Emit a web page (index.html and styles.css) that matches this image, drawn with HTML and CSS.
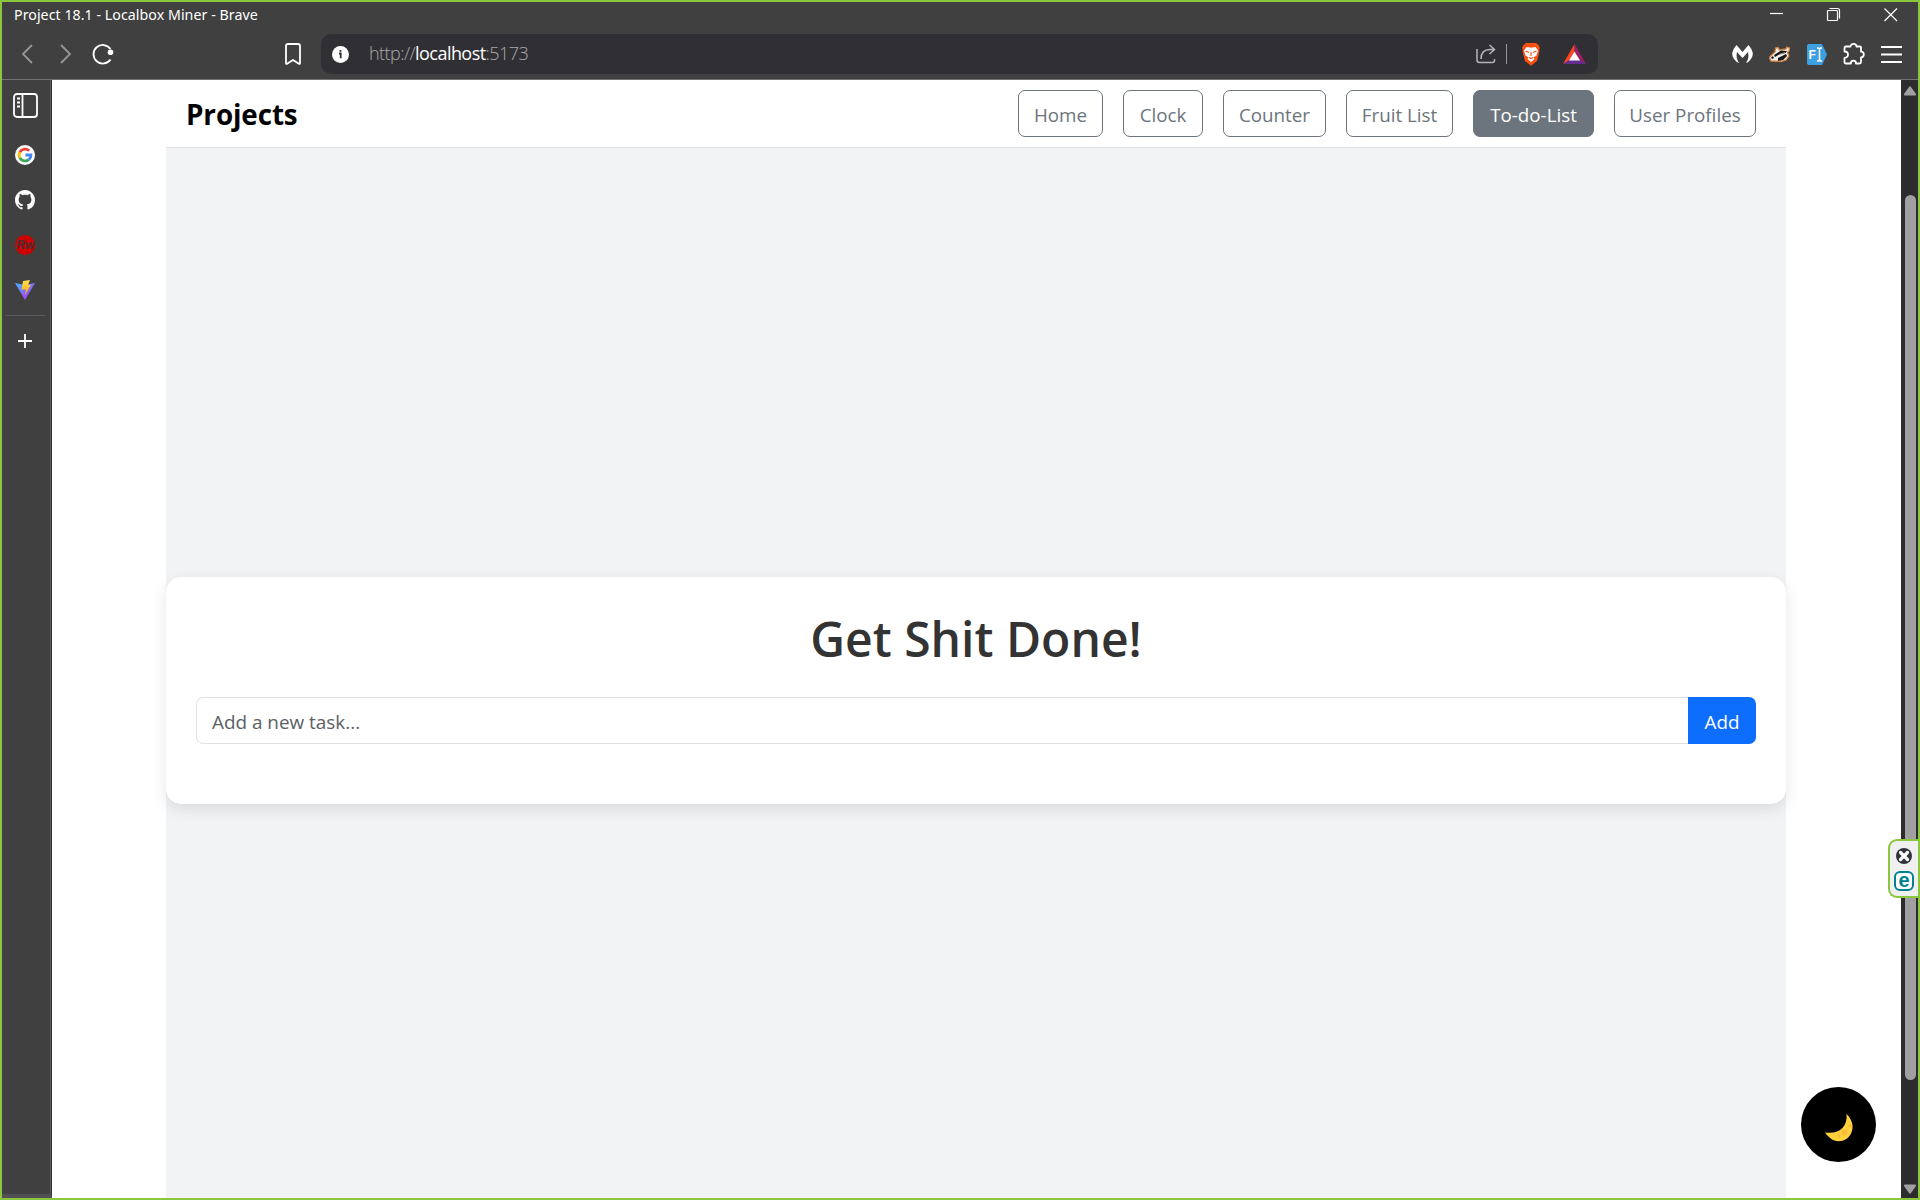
FILE: index.html
```html
<!DOCTYPE html>
<html lang="en">
<head>
<meta charset="utf-8">
<title>Project 18.1</title>
<link rel="stylesheet" href="styles.css">
</head>
<body>
<div class="window">
  <header class="chrome">
    <div class="titlebar">
      <span class="title">Project 18.1 - Localbox Miner - Brave</span>
      <div class="controls">
        <svg width="14" height="14" viewBox="0 0 14 14"><path d="M0 5.500h13" class="thin"/></svg>
        <svg width="14" height="14" viewBox="0 0 14 14"><rect x=".5" y="2.500" width="10" height="10" rx="1" class="thin"/><path d="M2.500.5h8q2 0 2 2v8" class="thin"/></svg>
        <svg width="14" height="14" viewBox="0 0 14 14"><path d="M.5.5l12.500 12.500M13 .5L.5 13" class="thin"/></svg>
      </div>
    </div>
    <div class="toolbar">
      <div class="nav-icons">
        <svg width="12" height="20" viewBox="0 0 12 20"><path d="M11 1L2 10l9 9" class="dim"/></svg>
        <svg width="12" height="20" viewBox="0 0 12 20"><path d="M1 1l9 9-9 9" class="dim"/></svg>
        <svg width="22" height="22" viewBox="0 0 22 22"><path d="M18.500 16.500A9.300 9.300 0 1 1 18.500 6" class="line"/><circle cx="18.500" cy="9.300" r="2.800" fill="#fff"/></svg>
        <svg class="bookmark" width="16" height="22" viewBox="0 0 16 22"><path d="M1 20V3q0-2 2-2h10q2 0 2 2v17q0 1.500-1.500.5L8 17l-5.500 3.500Q1 21.500 1 20z" class="line"/></svg>
      </div>
      <div class="address">
        <svg width="17" height="17" viewBox="0 0 17 17"><circle cx="8.500" cy="8.500" r="8.500" fill="#fff"/><path d="M8.500 4v1.800M7 7.500h1.700v4.800" stroke="#303034" stroke-width="1.800" fill="none"/></svg>
        <span class="url">http://<b>localhost</b>:5173</span>
        <div class="address-tools">
          <svg width="20" height="20" viewBox="0 0 20 20"><path d="M1 5v11q0 2.500 2.500 2.500h13q2 0 2-2V15M5 15q0-9.500 9-9.500h4M13.500 1L18.500 5.500 13.500 10" stroke="#b5b5b7" stroke-width="1.500" fill="none"/></svg>
          <i class="divider"></i>
          <svg width="20" height="23" viewBox="0 0 20 23"><path d="M5 0h10l2.500 2L19 5l-1 2 .5 1-2.500 10-6 4.700L4 18 1.500 8 2 7 1 5l1.500-3z" fill="#fb5011"/><path d="M5.500 4l4.500.7L14.500 4l2.500 3.500-1.500 5-3 2 1 1.500-3.500 3-3.500-3 1-1.500-3-2-1.500-5z" fill="#fff"/><path d="M4.500 8l3.500 1.500M15.500 8L12 9.500M10 9v4m-2 1.500l2 1 2-1" stroke="#fb5011" stroke-width="1.200" fill="none"/></svg>
          <svg class="bat" width="23" height="20" viewBox="0 0 23 20"><path d="M11.500 0v8L6 17l-6 3z" fill="#ff4724"/><path d="M11.500 0L23 20l-7-3.500-4.500-8.500z" fill="#9e1f63"/><path d="M0 20l6-4h11l6 4z" fill="#662d91"/><path d="M11.500 7.500l5.500 9H6z" fill="#fff"/></svg>
        </div>
      </div>
      <div class="extensions">
        <svg width="21" height="18" viewBox="0 0 21 18"><path d="M4.500 0l6 7 6-7q7 8 2.500 14-2 3-5 4 3.500-5 2-11l-5.500 6L5 7q-1.500 6 2 11-3-1-5-4-4.500-6 2.500-14z" fill="#fff"/></svg>
        <svg width="22" height="17" viewBox="0 0 22 17"><path d="M1 10.500L6 6l.5-4L9 1.500 10.500 4 17 3l1-2 2.500 1-.5 3-1.500 1.500L20 10l-3 4-5 1.500-10-.5L.5 12z" fill="#f0efec" stroke="#d5813f" stroke-width="1.300"/><path d="M5 9l7-4.500 6 .5-1.500 2L11 8l-5 3zM9 12l8-4 1 2-4 4-5 1z" fill="#171717"/><path d="M2 11.500l2-1.500 1 2-2 1z" fill="#171717"/><path d="M10 8.500l6-2" stroke="#8a8a88" fill="none"/></svg>
        <svg width="20" height="21" viewBox="0 0 20 21"><path d="M2 0h13l5 10.500L15 21H2q-2 0-2-2V2q0-2 2-2z" fill="#3da0e2"/><text x="1.500" y="15" class="fi">F</text><path d="M10 4h1.500l1 1 1-1H15M10 17h1.500l1-1 1 1H15M12.500 5v11" stroke="#fff" stroke-width="1.500" fill="none"/></svg>
        <svg width="22" height="22" viewBox="0 0 22 22"><path d="M3 3.500h4.500a3 2.700 0 0 1 6 0H17q1 0 1 1v4.200a2.700 2.700 0 0 1 0 5.600V19q0 1.500-1.500 1.500H13a2.600 2.800 0 0 0-5.200 0H3Q1.500 20.500 1.500 19v-4.200q3.500 0 3.500-3.200T1.500 8.500v-3.500q0-1.500 1.500-1.500z" class="line"/></svg>
        <svg width="21" height="17" viewBox="0 0 21 17"><path d="M0 1h21M0 8.500h21M0 16h21" class="menu"/></svg>
      </div>
    </div>
  </header>
  <div class="main">
    <aside class="sidebar">
      <svg class="panel" width="25" height="25" viewBox="0 0 25 25"><rect x="1" y="1" width="23" height="23" rx="3" class="line"/><path d="M9.500 1v23" class="line"/><path d="M4 5.500h3M4 9.500h3M4 13.500h3" class="line"/></svg>
      <svg class="site" width="20" height="20" viewBox="0 0 20 20"><circle cx="10" cy="10" r="10" fill="#fff"/><g fill="none" stroke-width="2.800"><path d="M14.200 5.800A6 6 0 0 0 4.800 7.200" stroke="#ea4335"/><path d="M4.800 7.200a6 6 0 0 0 0 5.600" stroke="#fbbc05"/><path d="M4.800 12.800a6 6 0 0 0 9 1.800" stroke="#34a853"/><path d="M13.800 14.600Q16 12.700 16 10h-5.500" stroke="#4285f4"/></g></svg>
      <svg class="site" width="20" height="20" viewBox="0 0 16 16"><path fill="#fff" d="M8 0C3.580 0 0 3.580 0 8c0 3.540 2.290 6.530 5.470 7.590.4.070.55-.17.55-.38 0-.19-.01-.82-.01-1.490-2.010.37-2.530-.49-2.690-.94-.09-.23-.48-.94-.82-1.130-.28-.15-.68-.52-.01-.53.63-.01 1.080.58 1.230.82.72 1.210 1.870.87 2.330.66.070-.52.28-.87.51-1.070-1.780-.2-3.640-.89-3.640-3.950 0-.87.31-1.590.82-2.150-.08-.2-.36-1.020.08-2.120 0 0 .67-.21 2.200.82.64-.18 1.320-.27 2-.27s1.360.09 2 .27c1.530-1.040 2.200-.82 2.200-.82.44 1.100.16 1.920.08 2.120.51.56.82 1.270.82 2.150 0 3.070-1.870 3.750-3.650 3.950.29.25.54.73.54 1.480 0 1.070-.01 1.930-.01 2.200 0 .21.15.46.55.38A8.010 8.010 0 0 0 16 8c0-4.420-3.580-8-8-8z"/></svg>
      <svg class="site" width="20" height="20" viewBox="0 0 20 20"><circle cx="10" cy="10" r="10" fill="#cc0000"/><text x="1" y="14" class="rw" textLength="18">Rw</text></svg>
      <svg class="site" width="20" height="20" viewBox="0 0 20 20"><defs><linearGradient id="v" x1="0" y1="0" x2=".7" y2="1"><stop offset="0" stop-color="#41b8ff"/><stop offset="1" stop-color="#b534f4"/></linearGradient><linearGradient id="bolt" x1="0" y1="0" x2="0" y2="1"><stop offset="0" stop-color="#ffdf55"/><stop offset="1" stop-color="#ffa800"/></linearGradient></defs><path d="M0 3l10 2 10-2-10 17z" fill="url(#v)"/><path d="M8 1l7-1-2 5 3-.5L10 15l1-5.500H6.500z" fill="url(#bolt)"/></svg>
      <i class="rule"></i>
      <svg class="plus" width="14" height="14" viewBox="0 0 14 14"><path d="M7 0v14M0 7h14" class="line"/></svg>
    </aside>
    <main class="page">
      <nav class="navbar">
        <span class="brand">Projects</span>
        <div class="links">
          <a class="btn home">Home</a><a class="btn clock">Clock</a><a class="btn counter">Counter</a><a class="btn fruit">Fruit List</a><a class="btn todo">To-do-List</a><a class="btn users">User Profiles</a>
        </div>
      </nav>
      <section class="content">
        <div class="card">
          <h1>Get Shit Done!</h1>
          <div class="input-group">
            <div class="field"><span>Add a new task...</span></div>
            <button class="add">Add</button>
          </div>
        </div>
      </section>
    </main>
    <div class="scrollbar">
      <svg width="12" height="10" viewBox="0 0 12 10"><path d="M5 1q1-1.500 2 0l5 7q.5 1.500-1 1.500H1q-1.500 0-1-1.500z" fill="#a0a0a0"/></svg>
      <i class="thumb"></i>
      <svg width="12" height="10" viewBox="0 0 12 10"><path d="M5 9q1 1.500 2 0l5-7q.5-1.500-1-1.500H1Q-.5.5 0 2z" fill="#a0a0a0"/></svg>
    </div>
  </div>
  <div class="moon">
    <svg width="28" height="27" viewBox="0 0 28 27"><path d="M21.500 0C27 5 29.500 13 26 19.500 22 28 11 30 4 23Q1.500 21 0 18.500 12 20 17.500 14 22.500 8 21.500 0z" fill="#ffd23e"/><circle cx="19.500" cy="18.500" r="3" fill="#f9bc38"/><circle cx="14" cy="22" r="1.600" fill="#f9bc38"/><circle cx="25" cy="12" r="1.400" fill="#f9bc38"/></svg>
  </div>
  <div class="badge">
    <svg width="16" height="16" viewBox="0 0 16 16"><circle cx="8" cy="8" r="8" fill="#31343c"/><path d="M4.500 4.500l7 7m0-7l-7 7" stroke="#fff" stroke-width="3.200" stroke-linecap="round"/></svg>
    <span class="e">e</span>
  </div>
</div>
</body>
</html>
```
FILE: styles.css
```css
* { box-sizing: border-box; }
body { margin: 0; font-family: "Open Sans", sans-serif; }
svg { display: block; flex: none; overflow: visible; }
.window { position: relative; width: 1920px; height: 1200px; border: 2px solid #8cc63f; display: flex; flex-direction: column; overflow: hidden; background: #404040; }
.chrome { height: 78px; flex: none; border-bottom: 1px solid #737373; color: #fff; }
.titlebar { height: 26px; display: flex; justify-content: space-between; padding: 0 20px 0 12px; }
.title { font-family: "Noto Sans", sans-serif; font-size: 14.2px; line-height: 25px; letter-spacing: .05px; white-space: nowrap; }
.controls { display: flex; gap: 43px; padding-top: 6px; }
.thin { stroke: #fff; stroke-width: 1.2; fill: none; }
.dim { stroke: #969696; stroke-width: 1.8; fill: none; }
.line { stroke: #fff; stroke-width: 1.8; fill: none; stroke-linejoin: round; }
.menu { stroke: #fff; stroke-width: 2; }
.toolbar { display: flex; height: 51px; padding-top: 6px; }
.nav-icons { width: 319px; display: flex; align-items: center; height: 40px; padding-left: 19px; gap: 27px; }
.nav-icons svg:nth-child(3) { margin-left: -7px; }
.bookmark { margin-left: 144px; }
.address { width: 1277px; height: 40px; border-radius: 10px; background: #303034; display: flex; align-items: center; padding: 0 12px 0 11px; }
.url { margin-left: 20px; font-size: 18px; letter-spacing: -.55px; line-height: 38px; margin-top: -2px; font-weight: 300; color: #aaa; white-space: nowrap; }
.url b { font-weight: 400; color: #fff; }
.address-tools { margin-left: auto; display: flex; align-items: center; }
.divider { width: 1px; height: 20px; background: #96969a; margin: 0 14px 0 10px; }
.bat { margin-left: 22px; }
.extensions { margin-left: 134px; height: 40px; display: flex; align-items: center; gap: 16px; }
.fi { font: 700 12px "Liberation Sans", sans-serif; fill: #fff; }
.main { height: 1118px; display: flex; }
.sidebar { width: 50px; border-right: 1px solid #333; box-shadow: inset -1px 0 #58585b; border-bottom: 4px solid #505055; padding-top: 13px; display: flex; flex-direction: column; }
.panel { margin-left: 11px; margin-bottom: 27px; }
.site { margin: 0 0 25px 13px; }
.rw { font: italic 700 12px "Liberation Sans", sans-serif; fill: #493030; }
.rule { width: 40px; height: 1px; background: #5a5a62; margin: -10px 0 18px 3px; flex: none; }
.plus { margin-left: 16px; }
.page { width: 1849px; background: #fff; padding: 0 114px 0 114px; display: flex; flex-direction: column; }
.navbar { width: 1620px; height: 68px; flex: none; border-bottom: 1px solid #dee2e6; display: flex; justify-content: space-between; padding: 10px 30px 10px 20px; }
.brand { font-size: 27.8px; font-weight: 700; line-height: 48px; letter-spacing: -.1px; color: #000; }
.links { display: flex; gap: 20px; }
.btn { height: 47px; border: 1px solid #6c757d; border-radius: 7px; color: #6c757d; font-size: 18.8px; line-height: 48px; text-align: center; white-space: nowrap; }
.home { width: 85px; } .clock { width: 80px; } .counter { width: 103px; } .fruit { width: 107px; } .todo { width: 121px; background: #6c757d; color: #fff; } .users { width: 142px; }
.content { width: 1620px; height: 1050px; background: #f2f3f5; padding-top: 429px; }
.card { height: 227px; border-radius: 15px; background: #fff; box-shadow: 0 5px 15px rgba(0,0,0,.1); padding: 30px; }
h1 { margin: 0; height: 90px; line-height: 64px; font-size: 48px; font-weight: 600; color: #333; text-align: center; white-space: nowrap; }
.input-group { display: flex; height: 47px; }
.field { flex: 1; border: 1px solid #dee2e6; border-right: 0; border-radius: 7px 0 0 7px; padding-left: 15px; font-size: 18.9px; line-height: 48px; color: #5b6065; }
.add { width: 68px; border: 0; border-radius: 0 7px 7px 0; background: #0d6efd; color: #fff; font: 18.8px/47px "Open Sans", sans-serif; padding: 2px 0 0; }
.scrollbar { width: 17px; background: #2c2c2c; display: flex; flex-direction: column; padding: 6px 0 4px 3px; }
.thumb { width: 11px; height: 885px; border-radius: 6px; background: #a0a0a0; margin: 99px 0 auto 1px; }
.moon { position: absolute; left: 1799px; top: 1085px; width: 75px; height: 75px; border-radius: 50%; background: #000; padding: 27px 0 0 24px; }
.badge { position: absolute; left: 1886px; top: 837px; width: 32px; height: 59px; border: 2px solid #8cc63f; border-right: 0; border-radius: 9px 0 0 9px; background: #f0f0f0; padding: 7px 0 0 6px; }
.e { display: block; width: 20px; height: 20px; margin: 7px 0 0 -2px; border: 2px solid #008391; border-radius: 6px; background: #fff; color: #008391; font: 700 20px/14px "Liberation Sans", sans-serif; text-align: center; }
```
